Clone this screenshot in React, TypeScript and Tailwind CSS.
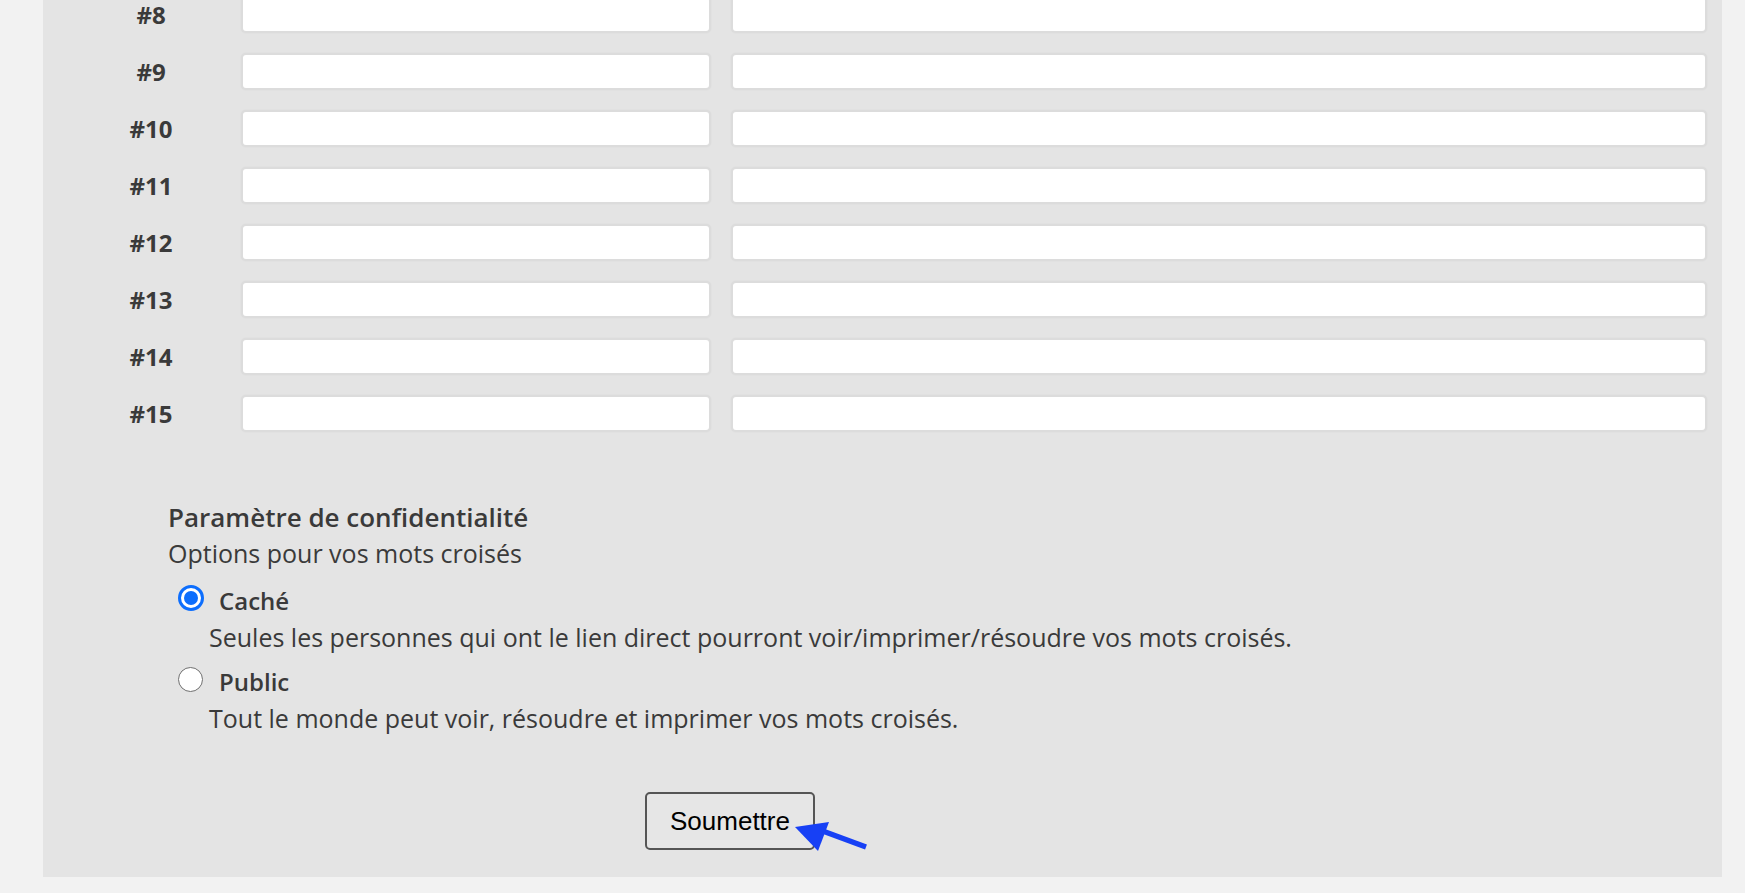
const rows = [8, 9, 10, 11, 12, 13, 14, 15]

function WordRow({ n }: { n: number }) {
    return (
        <div className="flex items-center h-[37px]">
            <div className="w-[120px] ml-[48px] mr-[30px] text-center text-[24px] font-bold text-[#3a3a3a] leading-none">#{n}</div>
            <input type="text" className="w-[470px] h-[37px] bg-white border-2 border-[#dcdcdc] rounded-[5px] shadow-[0_0_2px_rgba(0,0,0,0.06)] outline-none" />
            <input type="text" className="ml-[20px] flex-1 h-[37px] bg-white border-2 border-[#dcdcdc] rounded-[5px] shadow-[0_0_2px_rgba(0,0,0,0.06)] outline-none" />
        </div>
    )
}

function Radio({ checked }: { checked: boolean }) {
    return checked ? (
        <span className="block w-[26px] h-[26px] rounded-full border-[3px] border-[#0d6efd] bg-white flex items-center justify-center shrink-0">
            <span className="block w-[14px] h-[14px] rounded-full bg-[#0d6efd]" />
        </span>
    ) : (
        <span className="block w-[25px] h-[25px] rounded-full border-[1.5px] border-[#6f6f6f] bg-white shrink-0" />
    )
}

export default function App() {
    return (
        <div className="min-h-[893px] bg-[#f2f2f2] overflow-hidden font-['Open_Sans',sans-serif]">
            <div className="ml-[43px] w-[1679px] bg-[#e4e4e4] pr-[15px] pb-[27px] -mt-[4px]">
                <div className="flex flex-col gap-[20px]">
                    {rows.map((n) => <WordRow key={n} n={n} />)}
                </div>

                <div className="ml-[125px] mt-[67px] text-[25px] leading-[36px] text-[#3a3a3a]">
                    <div className="font-semibold text-[26px]">Paramètre de confidentialité</div>
                    <div>Options pour vos mots croisés</div>

                    <div className="flex items-center mt-[12px]">
                        <span className="flex ml-[10px] -mt-[6px]"><Radio checked /></span>
                        <span className="ml-[15px] font-semibold text-[24px]">Caché</span>
                    </div>
                    <div className="ml-[41px]">Seules les personnes qui ont le lien direct pourront voir/imprimer/résoudre vos mots croisés.</div>

                    <div className="flex items-center mt-[9px]">
                        <span className="flex ml-[10px] -mt-[6px]"><Radio checked={false} /></span>
                        <span className="ml-[16px] font-semibold text-[24px]">Public</span>
                    </div>
                    <div className="ml-[41px]">Tout le monde peut voir, résoudre et imprimer vos mots croisés.</div>
                </div>

                <div className="relative ml-[602px] mt-[56px] w-[170px]">
                    <button className="w-[170px] h-[58px] border-2 border-[#555] rounded-[5px] bg-[#e6e6e6] text-black text-[26px] font-['Liberation_Sans',Arial,sans-serif]">
                        Soumettre
                    </button>
                    <svg className="absolute left-[150px] top-[28px]" width="76" height="36" viewBox="0 0 76 36">
                        <line x1="25" y1="10" x2="71" y2="27" stroke="#1740f5" strokeWidth="5.5" />
                        <polygon points="0,7 34,2 23,31" fill="#1740f5" />
                    </svg>
                </div>
            </div>
        </div>
    )
}
